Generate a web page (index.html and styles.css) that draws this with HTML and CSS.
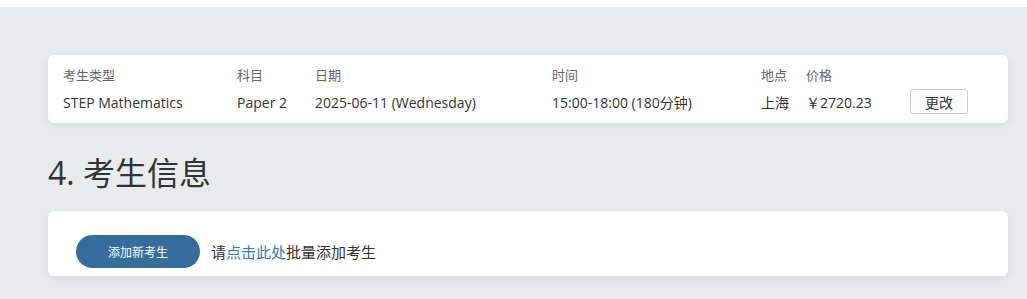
FILE: index.html
```html
<!DOCTYPE html>
<html lang="zh-CN">
<head>
<meta charset="utf-8">
<title>考生信息</title>
<link rel="stylesheet" href="styles.css">
</head>
<body>
<div class="topbar"></div>
<main class="page">
  <section class="card summary">
    <div class="grid">
      <div class="lbl">考生类型</div>
      <div class="lbl">科目</div>
      <div class="lbl">日期</div>
      <div class="lbl">时间</div>
      <div class="lbl">地点</div>
      <div class="lbl">价格</div>
      <div class="lbl"></div>
      <div class="val">STEP Mathematics</div>
      <div class="val">Paper 2</div>
      <div class="val">2025-06-11 (Wednesday)</div>
      <div class="val">15:00-18:00 (180分钟)</div>
      <div class="val">上海</div>
      <div class="val">￥2720.23</div>
      <div class="val"><button class="btn-change">更改</button></div>
    </div>
  </section>
  <h2 class="section-title">4. 考生信息</h2>
  <section class="card students">
    <button class="btn-add">添加新考生</button>
    <span class="hint">请<a class="link" href="#">点击此处</a>批量添加考生</span>
  </section>
</main>
</body>
</html>
```

FILE: styles.css
```css
html, body {
  margin: 0;
  padding: 0;
}
body {
  background: #e9eced;
  font-family: "Open Sans", "Noto Sans CJK SC", sans-serif;
  color: #333;
  height: 299px;
  overflow: hidden;
}
.topbar {
  height: 7px;
  background: #ffffff;
}
.page {
  width: 960px;
  margin-left: 48px;
  padding-top: 48px;
}
.card {
  background: #fff;
  border-radius: 6px;
  box-shadow: 0 3px 10px rgba(0, 0, 0, 0.07);
}
.summary {
  padding: 10px 15px 9px 15px;
}
.grid {
  display: grid;
  grid-template-columns: 174px 78px 237px 209px 45px 104px auto;
  row-gap: 7px;
  align-items: center;
}
.lbl {
  font-size: 13px;
  line-height: 20px;
  color: #666;
}
.val {
  font-size: 14px;
  line-height: 20px;
  color: #333;
}
.btn-change {
  font-family: "Open Sans", "Noto Sans CJK SC", sans-serif;
  font-size: 14px;
  color: #333;
  background: #fff;
  border: 1px solid #ccc;
  border-radius: 3px;
  width: 58px;
  height: 25px;
  padding: 0;
  margin-top: -3px;
}
.section-title {
  margin: 30px 0 18px 0;
  font-size: 32px;
  line-height: 40px;
  font-weight: 400;
  color: #333;
}
.students {
  display: flex;
  align-items: center;
  gap: 11px;
  padding: 24px 28px 8px 28px;
}
.btn-add {
  font-family: "Open Sans", "Noto Sans CJK SC", sans-serif;
  width: 124px;
  height: 33px;
  border: none;
  border-radius: 17px;
  background: #346d9c;
  color: #fff;
  font-size: 12px;
  padding: 0;
}
.hint {
  font-size: 15px;
  line-height: 20px;
  color: #333;
}
.link {
  color: #337ab7;
  text-decoration: none;
}
```
